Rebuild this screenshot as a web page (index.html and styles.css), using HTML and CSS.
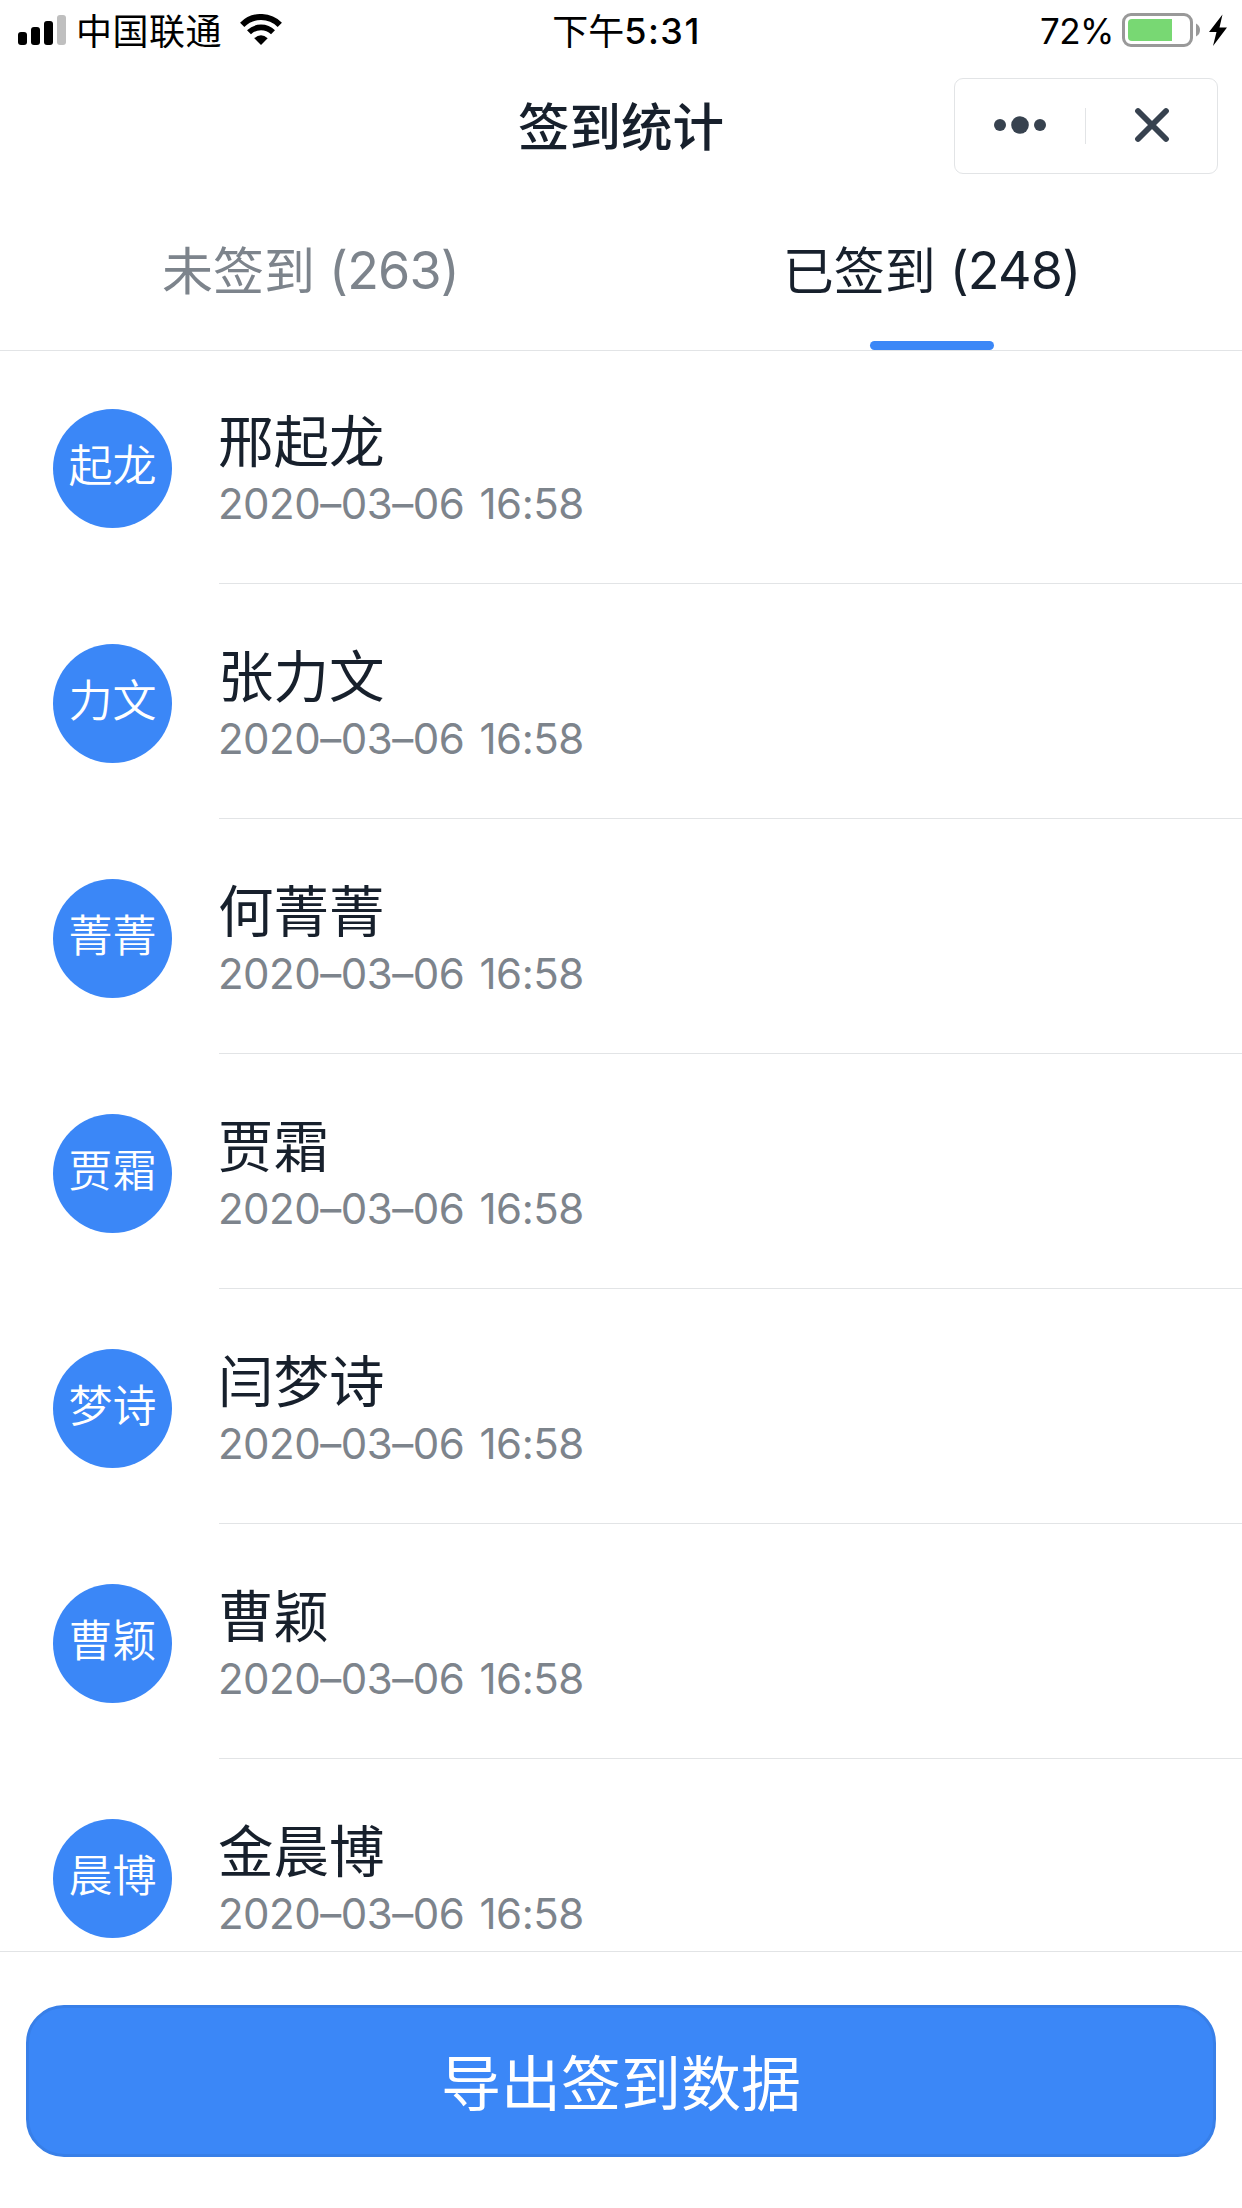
FILE: index.html
```
<!DOCTYPE html>
<html lang="zh-CN">
<head>
<meta charset="utf-8">
<title>签到统计</title>
<link rel="stylesheet" href="styles.css">
</head>
<body>
<div class="screen">
  <div class="status">
    <div class="status-left">
      <svg class="signal" width="48" height="30" viewBox="0 0 48 30">
        <rect x="0" y="17" width="9" height="13" rx="3"/>
        <rect x="13" y="12" width="9" height="18" rx="3"/>
        <rect x="26" y="6" width="9" height="24" rx="3"/>
        <rect x="39" y="0" width="9" height="30" rx="3" fill="#bfbfbf"/>
      </svg>
      <span class="carrier">中国联通</span>
      <svg class="wifi" width="42" height="31" viewBox="0 0 42 31">
        <path d="M2.2 10.8A26.500 26.500 0 0 1 39.800 10.800" fill="none" stroke="#000" stroke-width="6"/>
        <path d="M9 18.300A17 17 0 0 1 33 18.300" fill="none" stroke="#000" stroke-width="5.6"/>
        <path d="M14.3 24.2Q21 18.2 27.7 24.2L21 31Z"/>
      </svg>
    </div>
    <div class="clock"><span class="clock-period">下午</span><span class="clock-time">5:31</span></div>
    <div class="status-right">
      <span class="percent">72%</span>
      <svg class="battery" width="105" height="34" viewBox="0 0 105 34">
        <rect x="1.5" y="1.5" width="68" height="31" rx="7.5" fill="none" stroke="#999" stroke-width="3"/>
        <path d="M50 6H10a4 4 0 0 0-4 4v14a4 4 0 0 0 4 4h40z" fill="#78d873"/>
        <path d="M74 10.5q4 2 4 6.500t-4 6.500z" fill="#999"/>
        <path d="M100.500 1.500L87 19h7.500L91 33l14-18.500h-7.500z"/>
      </svg>
    </div>
  </div>
  <header class="navbar">
    <h1 class="title">签到统计</h1>
    <div class="capsule">
      <svg width="130" height="94" viewBox="0 0 130 94" fill="#37424f">
        <circle cx="45" cy="46" r="6"/><circle cx="65" cy="46" r="8.800"/><circle cx="85" cy="46" r="6"/>
      </svg>
      <i class="capsule-line"></i>
      <svg width="131" height="94" viewBox="0 0 131 94">
        <path d="M52 32L80 60M80 32L52 60" stroke="#37424f" stroke-width="5.800" stroke-linecap="round"/>
      </svg>
    </div>
  </header>
  <nav class="tabs">
    <div class="tab">未签到<span class="count">(263)</span></div>
    <div class="tab active">已签到<span class="count">(248)</span></div>
  </nav>
  <main class="list">
    <div class="row"><div class="avatar">起龙</div><div class="info"><div class="name">邢起龙</div><div class="time">2020–03–06 16:58</div></div></div>
    <div class="row"><div class="avatar">力文</div><div class="info"><div class="name">张力文</div><div class="time">2020–03–06 16:58</div></div></div>
    <div class="row"><div class="avatar">菁菁</div><div class="info"><div class="name">何菁菁</div><div class="time">2020–03–06 16:58</div></div></div>
    <div class="row"><div class="avatar">贾霜</div><div class="info"><div class="name">贾霜</div><div class="time">2020–03–06 16:58</div></div></div>
    <div class="row"><div class="avatar">梦诗</div><div class="info"><div class="name">闫梦诗</div><div class="time">2020–03–06 16:58</div></div></div>
    <div class="row"><div class="avatar">曹颖</div><div class="info"><div class="name">曹颖</div><div class="time">2020–03–06 16:58</div></div></div>
    <div class="row"><div class="avatar">晨博</div><div class="info"><div class="name">金晨博</div><div class="time">2020–03–06 16:58</div></div></div>
  </main>
  <footer class="footer"><button class="export">导出签到数据</button></footer>
</div>
</body>
</html>
```
FILE: styles.css
```
* { box-sizing: border-box; }
body {
  margin: 0;
  background: #fff;
  color: #17202c;
  font-family: "Noto Sans CJK SC", sans-serif;
}
.screen {
  width: 1242px;
  height: 2208px;
  display: flex;
  flex-direction: column;
  overflow: hidden;
  background: #fff;
}
.status {
  height: 60px;
  flex: none;
  display: grid;
  grid-template-columns: 1fr auto 1fr;
  color: #000;
  white-space: nowrap;
}
.status-left { display: flex; padding-left: 18px; }
.signal { margin-top: 15px; }
.carrier { margin-left: 10px; width: 164px; font-size: 36px; letter-spacing: 0.500px; line-height: 59px; }
.wifi { margin-top: 14px; }
.clock { display: flex; padding-left: 11px; }
.clock-period { font-size: 36px; line-height: 59px; }
.clock-time { font: 500 36px/62px Inter, sans-serif; letter-spacing: 1.500px; }
.status-right { display: flex; justify-content: flex-end; padding-right: 15px; }
.percent { font: 400 35px/63px Inter, sans-serif; margin-right: 8px; letter-spacing: -0.500px; }
.battery { margin-top: 13px; }
.navbar {
  height: 138px;
  flex: none;
  display: grid;
  grid-template-columns: 1fr auto 1fr;
  padding: 18px 24px 0;
}
.title { grid-column: 2; margin: 0; font-size: 51.500px; font-weight: 500; line-height: 92px; }
.capsule {
  justify-self: end;
  display: flex;
  align-items: center;
  width: 264px;
  height: 96px;
  border: 1px solid #e2e4e6;
  border-radius: 9px;
}
.capsule-line { width: 1px; height: 36px; background: #e2e4e6; }
.tabs { height: 153px; flex: none; display: flex; border-bottom: 1px solid #e2e4e6; }
.tab {
  flex: 1;
  display: flex;
  justify-content: center;
  position: relative;
  color: #7d848c;
  font-size: 51px;
  line-height: 141px;
}
.tab.active { color: #17202c; }
.tab.active::after {
  content: "";
  position: absolute;
  left: 249px;
  bottom: 0;
  width: 124px;
  height: 9px;
  border-radius: 4.500px;
  background: #3b87f7;
}
.count { margin-left: 14px; font: 400 52px/146px Inter, sans-serif; letter-spacing: -0.800px; }
.list { height: 1600px; flex: none; overflow: hidden; }
.row { display: flex; height: 235px; padding: 60px 0 0 53px; }
.row:first-child { height: 233px; padding-top: 58px; }
.avatar {
  flex: none;
  width: 119px;
  height: 119px;
  border-radius: 50%;
  background: #3b87f7;
  color: #fff;
  font-size: 44px;
  font-weight: 350;
  line-height: 109px;
  text-align: center;
}
.info { flex: 1; margin-left: 47px; border-bottom: 1px solid #e2e4e6; }
.name { margin-left: -1px; font-size: 55.500px; line-height: 58px; }
.time { margin-top: 6px; margin-left: -1px; color: #7d848c; font: 400 42px/62px Inter, sans-serif; letter-spacing: -0.500px; word-spacing: 4px; }
.footer { flex: 1; border-top: 1px solid #e2e4e6; padding: 53px 26px 0; }
.export {
  display: block;
  width: 100%;
  height: 152px;
  padding: 0 0 2px;
  border: 3px solid #387fe8;
  border-radius: 38px;
  background: #3b87f7;
  color: #fff;
  font: 400 60px/142px "Noto Sans CJK SC", sans-serif;
}
```
